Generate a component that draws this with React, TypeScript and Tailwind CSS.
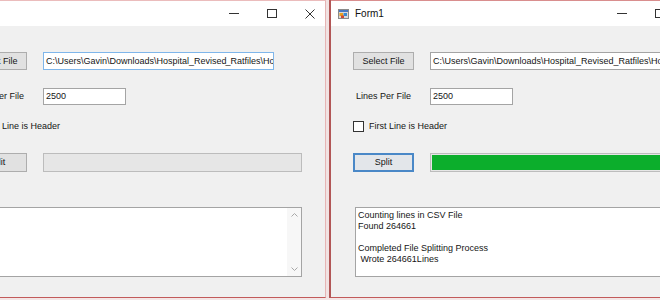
import React from "react";

const PATH =
  "C:\\Users\\Gavin\\Downloads\\Hospital_Revised_Ratfiles\\Hospital_Revised.csv";

function FormIcon() {
  return (
    <svg width="11" height="10" viewBox="0 0 11 10" className="shrink-0">
      <rect x="0.5" y="0.5" width="10" height="9" fill="#d9d9d9" stroke="#8a8a8a" />
      <rect x="1" y="1" width="9" height="2" fill="#4a78c0" />
      <rect x="1.5" y="4" width="3.5" height="3" fill="#e8a020" />
      <rect x="5.5" y="4" width="3.5" height="3" fill="#3a8ad0" />
      <rect x="3" y="6.5" width="3" height="2.5" fill="#d04a30" />
    </svg>
  );
}

function TitleBar({ title }: { title: string }) {
  return (
    <div className="flex h-[25px] shrink-0 items-center bg-white pl-[7px] pr-[10px]">
      <FormIcon />
      <span className="ml-[6px] text-[10px] leading-none text-[#111]">{title}</span>
      <div className="ml-auto flex items-center gap-[28px]">
        <div className="flex h-[10px] w-[10px] items-center">
          <div className="h-px w-[10px] bg-[#333]" />
        </div>
        <div className="h-[9px] w-[10px] border border-[#333]" />
        <svg width="10" height="10" viewBox="0 0 10 10">
          <path d="M0.5 0.5 L9.5 9.5 M9.5 0.5 L0.5 9.5" stroke="#333" strokeWidth="1" />
        </svg>
      </div>
    </div>
  );
}

function Win({ active }: { active: boolean }) {
  return (
    <div
      className={
        "flex h-[298px] w-[382px] shrink-0 flex-col bg-[#f0f0f0] border-t border-b border-b-[#c25a5a] " +
        (active ? "border-t-[#d98e8e]" : "border-t-[#ebbcbc] border-r border-r-[#e6b4b4]")
      }
    >
      <TitleBar title="Form1" />
      <div className="flex flex-col text-[9px] leading-none text-[#151515]">
        {/* Row 1 */}
        <div className="mt-[26px] flex items-center">
          <div className="ml-[22px] flex h-[18px] w-[61px] items-center justify-center border border-[#adadad] bg-[#e1e1e1]">
            Select File
          </div>
          <div
            className={
              "ml-[16px] flex h-[18px] w-[231px] shrink-0 items-center overflow-hidden whitespace-nowrap border bg-white pl-[2px] " +
              (active ? "border-[#a4a4a4]" : "border-[#7fb6ea]")
            }
          >
            {active ? (
              PATH
            ) : (
              <>
                C:\Users\Gavin\Downloads\Hospital_Revised
                <span className="-mr-px inline-block h-[11px] w-px bg-black" />
                _Ratfiles\Hospital_Revised.csv
              </>
            )}
          </div>
        </div>
        {/* Row 2 */}
        <div className="mt-[18px] flex items-center">
          <div className="ml-[25px] w-[74px] whitespace-nowrap">Lines Per File</div>
          <div className="flex h-[17px] w-[83px] items-center border border-[#a4a4a4] bg-white pl-[2px]">
            2500
          </div>
        </div>
        {/* Row 3 */}
        <div className="mt-[16px] flex items-center">
          <div className="ml-[22px] h-[11px] w-[11px] border border-[#333] bg-white" />
          <div className="ml-[5px] whitespace-nowrap">First Line is Header</div>
        </div>
        {/* Row 4 */}
        <div className="mt-[21px] flex items-center">
          <div
            className={
              "ml-[22px] flex h-[19px] w-[61px] items-center justify-center " +
              (active
                ? "border-2 border-[#4a88c7] bg-[#e3e6ea]"
                : "border border-[#adadad] bg-[#e1e1e1]")
            }
          >
            Split
          </div>
          <div className="ml-[16px] flex h-[19px] w-[259px] border border-[#bcbcbc] bg-[#e6e6e6] p-px">
            {active && <div className="h-full w-full bg-[#0cae2c]" />}
          </div>
        </div>
        {/* Row 5 */}
        <div className="mt-[35px] flex">
          <div className="ml-[24px] flex h-[70px] w-[334px] border border-[#a4a4a4] bg-white">
            <div className="flex-1 whitespace-pre pl-[2px] pt-[2px] leading-[11px]">
              {active
                ? "Counting lines in CSV File\nFound 264661\n\nCompleted File Splitting Process\n Wrote 264661Lines"
                : ""}
            </div>
            <div className="flex w-[14px] flex-col items-center justify-between bg-[#f7f7f7] py-[5px]">
              <svg width="7" height="4" viewBox="0 0 7 4">
                <path d="M0.5 3.5 L3.5 0.5 L6.5 3.5" stroke="#a8a8a8" fill="none" />
              </svg>
              <svg width="7" height="4" viewBox="0 0 7 4">
                <path d="M0.5 0.5 L3.5 3.5 L6.5 0.5" stroke="#a8a8a8" fill="none" />
              </svg>
            </div>
          </div>
        </div>
      </div>
    </div>
  );
}

export default function App() {
  return (
    <div className="h-[300px] w-[660px] overflow-hidden bg-[#f3e6e6] font-['Liberation_Sans',Arial,sans-serif]">
      <div className="flex h-[298px] -ml-[56px]">
        <Win active={false} />
        <div className="h-full w-[3px] shrink-0 bg-[#f1e2e2]" />
        <div className="h-full w-[2px] shrink-0 bg-[#b25656]" />
        <Win active={true} />
      </div>
    </div>
  );
}
